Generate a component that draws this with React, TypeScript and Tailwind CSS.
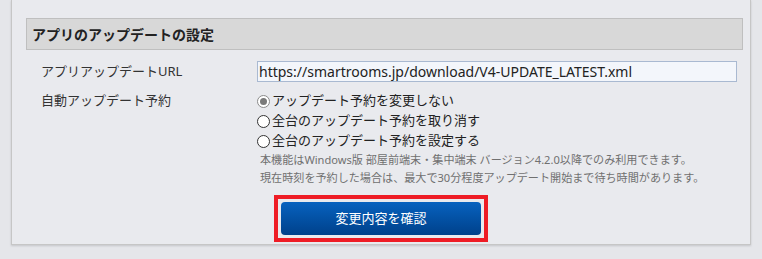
const font = { fontFamily: '"Noto Sans", "Noto Sans CJK JP", sans-serif' };

function Radio({ checked, label }: { checked?: boolean; label: string }) {
  return (
    <label className="flex items-center h-[20px] gap-[2px]">
      <span
        className={`w-[13px] h-[13px] rounded-full border bg-white flex items-center justify-center shrink-0 ${
          checked ? 'border-[#8a8a8a]' : 'border-[#333333]'
        }`}
      >
        {checked && <span className="w-[7px] h-[7px] rounded-full bg-[#7a7a7a]" />}
      </span>
      <span className="text-[13px] text-[#222]">{label}</span>
    </label>
  );
}

export default function App() {
  return (
    <div className="w-[762px] h-[259px] bg-[#e5e6ea] overflow-hidden" style={font}>
      <div className="ml-[11px] w-[740px] h-[245px] bg-[#e9eaee] border-x border-b border-[#c6c6c6] shadow-[0_1px_2px_rgba(0,0,0,0.15)] pt-[18px] pb-[3px]">
        <div className="ml-[14px] w-[717px] h-[32px] bg-[#d8d8d8] border border-[#bfbfbf] flex items-center pl-[5px]">
          <h2 className="text-[14px] font-bold text-[#222]">アプリのアップデートの設定</h2>
        </div>

        <div className="mt-[11px] pl-[29px] grid grid-cols-[216px_480px] items-center">
          <div className="text-[13px] text-[#333]">アプリアップデートURL</div>
          <input
            readOnly
            value="https://smartrooms.jp/download/V4-UPDATE_LATEST.xml"
            className="h-[21px] w-[480px] bg-[#f3f6fb] border border-[#a9b9d1] px-[1px] text-[14px] text-[#222] outline-none"
            style={font}
          />
        </div>

        <div className="mt-[9px] pl-[29px] grid grid-cols-[216px_480px]">
          <div className="text-[13px] text-[#333] h-[20px] flex items-center">自動アップデート予約</div>
          <div>
            <Radio checked label="アップデート予約を変更しない" />
            <Radio label="全台のアップデート予約を取り消す" />
            <Radio label="全台のアップデート予約を設定する" />
            <div className="pl-[3px] text-[11.1px] leading-[18px] text-[#707070] whitespace-nowrap">
              <p>本機能はWindows版 部屋前端末・集中端末 バージョン4.2.0以降でのみ利用できます。</p>
              <p>現在時刻を予約した場合は、最大で30分程度アップデート開始まで待ち時間があります。</p>
            </div>
          </div>
        </div>

        <div className="mt-[8px] flex justify-center">
          <div className="border-4 border-[#ee1c25] p-[3px]">
            <button className="w-[200px] h-[33px] rounded-[4px] bg-gradient-to-b from-[#0862bf] to-[#00418b] text-white text-[13px]" style={font}>
              変更内容を確認
            </button>
          </div>
        </div>
      </div>
    </div>
  );
}
